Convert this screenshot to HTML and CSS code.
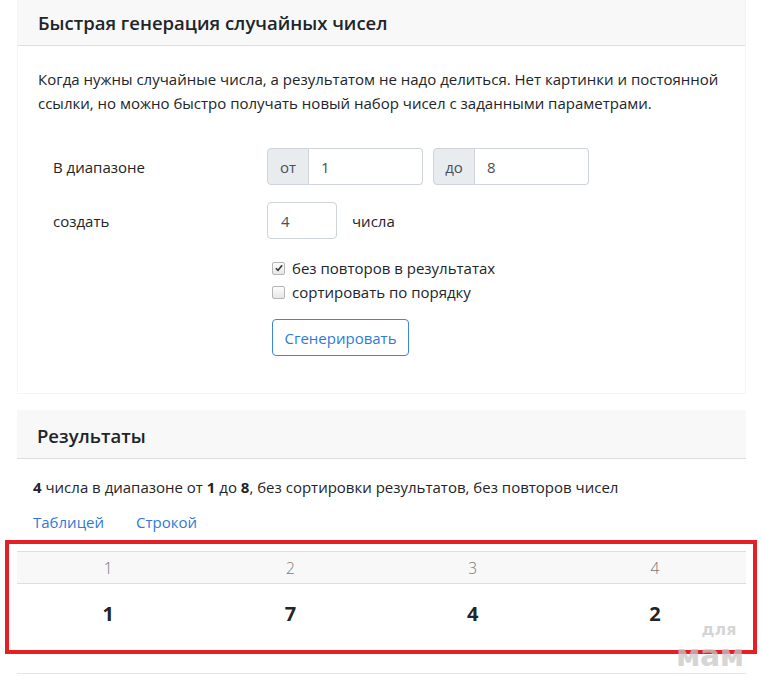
FILE: index.html
```html
<!DOCTYPE html>
<html lang="ru">
<head>
<meta charset="utf-8">
<title>Быстрая генерация случайных чисел</title>
<link rel="stylesheet" href="styles.css">
</head>
<body>
<div class="page">
  <section class="card card-gen">
    <div class="card-header"><h2>Быстрая генерация случайных чисел</h2></div>
    <div class="card-body">
      <p class="lead">Когда нужны случайные числа, а результатом не надо делиться. Нет картинки и постоянной ссылки, но можно быстро получать новый набор чисел с заданными параметрами.</p>
      <div class="form">
        <div class="row">
          <div class="label">В диапазоне</div>
          <div class="controls">
            <div class="igroup"><span class="addon">от</span><span class="field">1</span></div>
            <div class="igroup"><span class="addon">до</span><span class="field">8</span></div>
          </div>
        </div>
        <div class="row row2">
          <div class="label">создать</div>
          <div class="controls">
            <span class="field small">4</span><span class="after">числа</span>
          </div>
        </div>
        <div class="checks">
          <label class="check"><span class="box checked"><svg viewBox="0 0 12 12" width="10" height="10"><path d="M2.2 6.3 L4.8 8.8 L9.8 2.8" fill="none" stroke="#333" stroke-width="1.8"/></svg></span>без повторов в результатах</label>
          <label class="check"><span class="box"></span>сортировать по порядку</label>
        </div>
        <button class="btn">Сгенерировать</button>
      </div>
    </div>
  </section>

  <section class="card card-res">
    <div class="card-header tall"><h2>Результаты</h2></div>
    <div class="res-body">
      <p class="summary"><b>4</b> числа в диапазоне от <b>1</b> до <b>8</b>, без сортировки результатов, без повторов чисел</p>
      <div class="tabs"><a class="tab">Таблицей</a><a class="tab">Строкой</a></div>
    </div>
    <div class="table">
      <div class="thead"><span>1</span><span>2</span><span>3</span><span>4</span></div>
      <div class="tbody"><span>1</span><span>7</span><span>4</span><span>2</span></div>
    </div>
    <div class="bottom-line"></div>
  </section>

  <div class="highlight"></div>
  <div class="watermark"><span class="w1">для</span><span class="w2">мам</span></div>
</div>
</body>
</html>
```

FILE: styles.css
```css
* { box-sizing: border-box; }
html, body { margin: 0; padding: 0; background: #fff; }
body {
  font-family: "Open Sans", "Noto Sans", "Liberation Sans", sans-serif;
  color: #212529;
  font-size: 15px;
  width: 762px;
  height: 680px;
  overflow: hidden;
}
.page { position: relative; width: 762px; height: 680px; }

.card {
  margin-left: 17px;
  width: 729px;
  background: #fff;
}
.card-gen {
  border-left: 1px solid #f4f4f4;
  border-right: 1px solid #f4f4f4;
  border-bottom: 1px solid #f4f4f4;
  height: 394px;
}
.card-header {
  height: 46px;
  background: #f8f8f8;
  border-bottom: 1px solid #dedede;
  display: flex;
  align-items: center;
  padding-left: 20px;
}
.card-header.tall { height: 49px; padding-top: 2px; }
.card-header h2 {
  margin: 0;
  font-size: 18.5px;
  font-weight: 600;
  color: #212529;
}
.card-body { padding: 21px 20px 0 20px; }
.lead {
  margin: 0;
  font-size: 15px;
  line-height: 24px;
  color: #212529;
}
.form { margin-top: 33px; }
.row { display: flex; align-items: center; height: 37px; }
.row2 { margin-top: 17px; }
.label {
  width: 229px;
  padding-left: 15px;
  font-size: 15px;
  color: #212529;
}
.controls { display: flex; align-items: center; gap: 10px; }
.igroup { display: flex; width: 156px; height: 37px; }
.addon {
  width: 42px;
  display: flex; align-items: center; justify-content: center;
  background: #e9ecef;
  border: 1px solid #ced4da;
  border-radius: 4px 0 0 4px;
  color: #495057;
  font-size: 15px;
}
.field {
  flex: 1;
  display: flex; align-items: center;
  padding-left: 12px;
  border: 1px solid #ced4da;
  border-left: none;
  border-radius: 0 4px 4px 0;
  color: #495057;
  font-size: 15px;
  height: 37px;
}
.field.small {
  flex: none;
  width: 70px;
  border-left: 1px solid #ced4da;
  border-radius: 4px;
  padding-left: 13px;
}
.after { margin-left: 5px; font-size: 15px; }
.checks {
  margin-top: 17px;
  margin-left: 234px;
  display: flex; flex-direction: column;
}
.check {
  display: flex; align-items: center;
  height: 24px;
  font-size: 15px;
  color: #212529;
}
.box {
  width: 13px; height: 13px;
  border: 1px solid #b5b5b5;
  border-radius: 2px;
  background: linear-gradient(#fdfdfd, #e6e6e6);
  margin-right: 7px;
  display: flex; align-items: center; justify-content: center;
}
.btn {
  margin-top: 15px;
  margin-left: 234px;
  height: 37px;
  width: 137px;
  border: 1px solid #3d86e0;
  border-radius: 4px;
  background: #fff;
  color: #2f7ad8;
  font-family: inherit;
  font-size: 15px;
  padding: 0;
}

.card-res { margin-top: 16px; }
.res-body { padding: 16px 0 0 16px; }
.summary {
  margin: 0;
  line-height: 24px;
  font-size: 15px;
}
.summary b { font-weight: 700; }
.tabs { margin-top: 11px; display: flex; gap: 32px; height: 24px; align-items: center; }
.tab { color: #2f7ad8; font-size: 15px; }
.table { margin-top: 17px; }
.thead {
  display: grid; grid-template-columns: repeat(4, 1fr);
  height: 33px;
  background: #f8f8f8;
  border-top: 1px solid #dedede;
  border-bottom: 1px solid #dedede;
  align-items: center;
  color: #777;
  font-size: 15.5px;
  font-weight: 300;
}
.tbody {
  display: grid; grid-template-columns: repeat(4, 1fr);
  height: 58px;
  align-items: center;
  font-size: 20px;
  font-weight: 700;
  color: #212529;
}
.thead span, .tbody span { text-align: center; }
.bottom-line { margin-top: 31px; border-top: 1px solid #e6e6e6; }

.highlight {
  position: absolute;
  left: 5px; top: 540px;
  width: 752px; height: 114px;
  border: 4px solid #e41f26;
}
.watermark {
  position: absolute;
  left: 668px; top: 620px;
  width: 84px;
  display: flex; flex-direction: column; align-items: center;
  color: rgba(200, 200, 200, 0.75);
  font-family: "DejaVu Sans", sans-serif;
  font-weight: 700;
}
.w1 { font-size: 16px; line-height: 20px; margin-left: 18px; }
.w2 { font-size: 30px; line-height: 36px; letter-spacing: -0.5px; margin-top: -2px; }
```
